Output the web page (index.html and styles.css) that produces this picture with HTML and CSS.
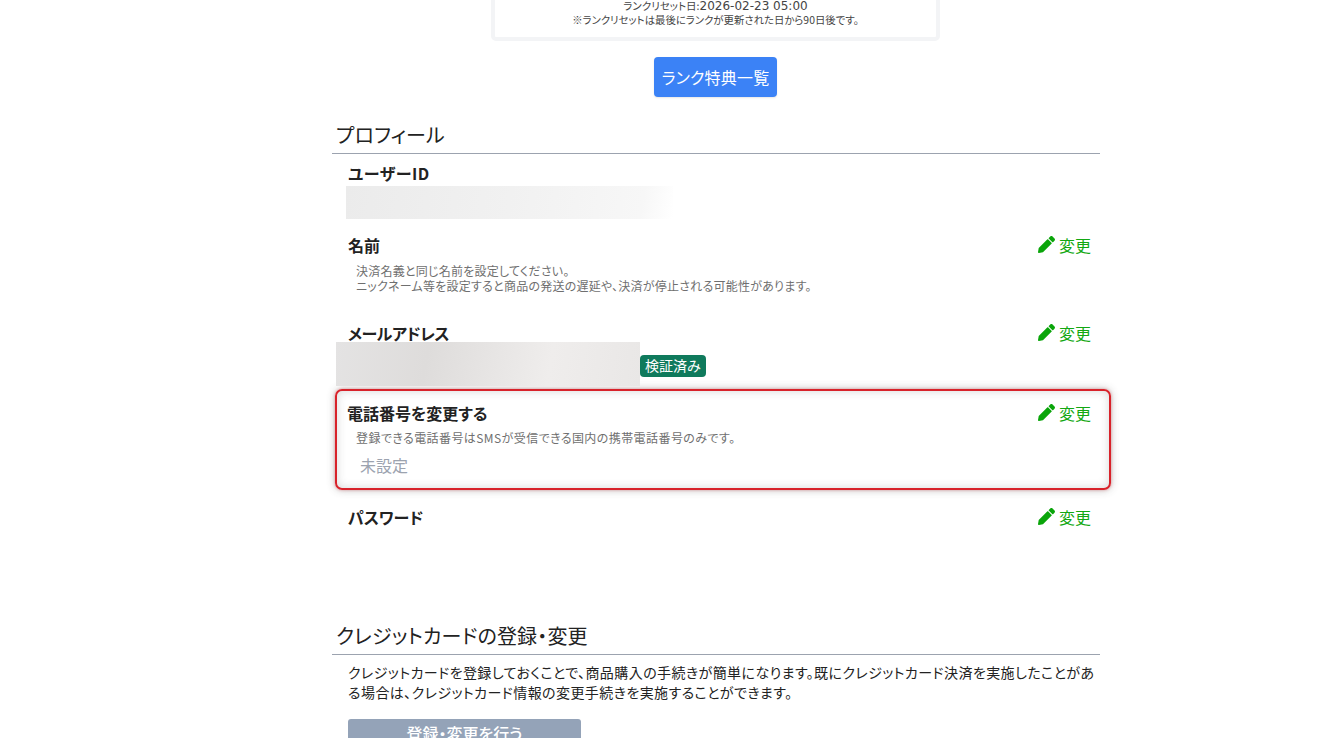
FILE: index.html
```html
<!DOCTYPE html>
<html lang="ja">
<head>
<meta charset="utf-8">
<title>プロフィール</title>
<link rel="stylesheet" href="styles.css">
</head>
<body>
<main class="page">
  <section class="rank-card">
    <p class="rank-date">ランクリセット日:<span class="rank-time">2026-02-23 05:00</span></p>
    <p class="rank-note">※ランクリセットは最後にランクが更新された日から90日後です。</p>
  </section>
  <div class="rank-action"><a class="btn-blue">ランク特典一覧</a></div>

  <h2 class="section-title">プロフィール</h2>
  <div class="profile">
    <div class="row row-id">
      <div class="row-head"><h3>ユーザーID</h3></div>
      <div class="blur blur-id"></div>
    </div>
    <div class="row row-name">
      <div class="row-head"><h3>名前</h3>
        <a class="change"><svg class="pen" viewBox="0 0 512 512"><use href="#pen"/></svg>変更</a></div>
      <p class="hint">決済名義と同じ名前を設定してください。<br>ニックネーム等を設定すると商品の発送の遅延や、決済が停止される可能性があります。</p>
    </div>
    <div class="row row-mail">
      <div class="row-head"><h3>メールアドレス</h3>
        <a class="change"><svg class="pen" viewBox="0 0 512 512"><use href="#pen"/></svg>変更</a></div>
      <div class="mail-value"><div class="blur blur-mail"></div><span class="badge">検証済み</span></div>
    </div>
    <div class="row row-phone">
      <div class="row-head"><h3>電話番号を変更する</h3>
        <a class="change"><svg class="pen" viewBox="0 0 512 512"><use href="#pen"/></svg>変更</a></div>
      <p class="hint">登録できる電話番号はSMSが受信できる国内の携帯電話番号のみです。</p>
      <p class="unset">未設定</p>
    </div>
    <div class="row row-pass">
      <div class="row-head"><h3>パスワード</h3>
        <a class="change"><svg class="pen" viewBox="0 0 512 512"><use href="#pen"/></svg>変更</a></div>
    </div>
  </div>

  <h2 class="section-title credit-title">クレジットカードの登録・変更</h2>
  <p class="credit-text">クレジットカードを登録しておくことで、商品購入の手続きが簡単になります。既にクレジットカード決済を実施したことがある場合は、クレジットカード情報の変更手続きを実施することができます。</p>
  <a class="btn-gray">登録・変更を行う</a>
</main>
<svg class="defs" aria-hidden="true"><defs><path id="pen" d="M497.9 142.1l-46.1 46.1c-4.7 4.7-12.3 4.7-17 0l-111-111c-4.7-4.7-4.7-12.3 0-17l46.1-46.1c18.7-18.7 49.1-18.7 67.9 0l60.1 60.1c18.8 18.7 18.8 49.1 0 67.9zM284.2 99.8L21.6 362.4.4 483.9c-2.9 16.4 11.4 30.6 27.8 27.8l121.5-21.3 262.6-262.6c4.7-4.7 4.7-12.3 0-17l-111-111c-4.8-4.7-12.4-4.7-17.1 0z"/></defs></svg>
</body>
</html>
```
FILE: styles.css
```css
* { box-sizing: border-box; }
html, body { margin: 0; height: 738px; overflow: hidden; background: #fff; }
body {
  font-family: "Noto Sans CJK JP", "Noto Sans", sans-serif;
  color: #222;
  font-feature-settings: "palt";
}
h2, h3, p { margin: 0; }
.defs { width: 0; height: 0; position: absolute; }

.page { width: 768px; margin: -20px 0 0 332px; }

.rank-card {
  width: 449px;
  height: 61px;
  margin-left: 159px;
  padding-top: 15px;
  border: 4px solid #f3f4f6;
  border-radius: 5px;
  text-align: center;
}
.rank-date { font-size: 10.5px; line-height: 14px; color: #444; }
.rank-time { font-family: "DejaVu Sans", sans-serif; font-size: 12px; }
.rank-note { font-size: 10.4px; line-height: 14px; color: #444; }

.rank-action { display: flex; justify-content: center; margin-top: 16px; padding-right: 1px; }
.btn-blue {
  width: 123px; height: 40px;
  display: flex; align-items: center; justify-content: center;
  background: #3b82f6;
  color: #fff;
  font-size: 16px;
  letter-spacing: .2px;
  border-radius: 4px;
  box-shadow: 0 1px 2px rgba(0,0,0,.1);
}

.section-title {
  margin-top: 24px;
  height: 33px;
  padding-left: 4px;
  font-size: 20px;
  line-height: 28px;
  font-weight: 400;
  letter-spacing: .15px;
  color: #222;
  border-bottom: 1px solid #9ca3af;
}

.row { padding: 0 9px 0 16px; }
.row-head { display: flex; justify-content: space-between; align-items: flex-start; height: 24px; }
.row-head h3 { font-size: 16px; line-height: 22px; font-weight: 700; color: #222; }
.change { display: flex; align-items: center; color: #12a812; font-size: 16px; line-height: 22px; }
.pen { width: 17px; height: 17px; fill: #0aa50a; margin-right: 4px; position: relative; top: -1px; }

.hint { font-size: 12px; line-height: 15px; color: #6f6f6f; padding-left: 8px; letter-spacing: .24px; }

.blur { background: linear-gradient(100deg, #ebebeb 0%, #f1f1f1 50%, #f7f7f7 90%, #fff 100%); }
.blur-id { width: 327px; height: 33px; margin-left: -2px; }

.row-id { padding-top: 8px; height: 80px; }
.row-id h3 { letter-spacing: .5px; }
.row-name { height: 88px; }
.row-name .hint { margin-top: 5px; }

.row-mail { height: 64px; }
.row-mail h3 { letter-spacing: -.45px; }
.row-mail .row-head { margin-bottom: -4px; }
.mail-value { display: flex; align-items: flex-end; margin-left: -12px; }
.blur-mail {
  flex: none;
  width: 304px; height: 44px;
  background: linear-gradient(100deg, #e4e3e3 0%, #dedcdb 30%, #efedec 70%, #e9e7e6 100%);
}
.badge {
  height: 22px;
  padding: 0 5px;
  margin-bottom: 9px;
  background: #0f7a5c;
  color: #fff;
  font-size: 14px;
  line-height: 20px;
  border-radius: 4px;
}

.row-phone {
  width: 776px;
  height: 101px;
  margin: 3px 0 0 3px;
  padding: 11px 18px 0 10px;
  border: 2px solid #d8222a;
  border-radius: 7px;
  box-shadow: 0 0 8px rgba(60,60,60,.3), 0 0 3px rgba(220,30,40,.4), inset 0 0 10px rgba(60,60,60,.2);
}
.row-phone .hint { margin-top: 4px; padding-left: 9px; letter-spacing: .42px; }
.unset { font-size: 16px; line-height: 24px; color: #9ca3af; padding-left: 13px; margin-top: 8px; }

.row-pass { padding-top: 16px; height: 132px; }

.credit-title { margin-top: 0; }
.credit-text { padding: 7px 0 0 16px; font-size: 14px; line-height: 20px; letter-spacing: .42px; color: #222; }
.btn-gray {
  display: block;
  width: 233px; height: 40px;
  margin: 17px 0 0 16px;
  background: #94a3b8;
  color: #fff;
  font-size: 16px;
  font-weight: 500;
  line-height: 28px;
  text-align: center;
  border-radius: 3px;
}
```
